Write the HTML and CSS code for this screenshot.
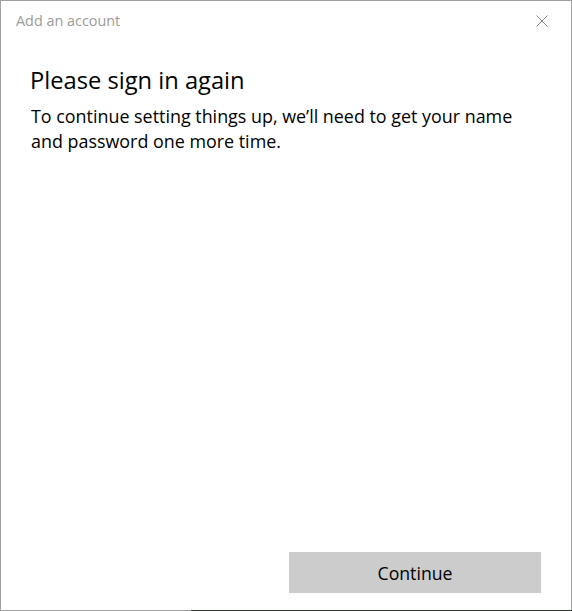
FILE: index.html
```html
<!DOCTYPE html>
<html lang="en">
<head>
  <meta charset="UTF-8">
  <title>Add an account</title>
  <link rel="stylesheet" href="styles.css">
</head>
<body>

<div class="dialog">
  <div class="titlebar">
    <span class="title">Add an account</span>
    <button class="close" aria-label="Close">
      <svg width="12" height="12" viewBox="0 0 12 12">
        <path d="M0.5 0.5 L11.5 11.5 M11.5 0.5 L0.5 11.5" stroke="#8a8a8a" stroke-width="1" fill="none"/>
      </svg>
    </button>
  </div>

  <div class="content">
    <h1>Please sign in again</h1>
    <p>To continue setting things up, we’ll need to get your name and password one more time.</p>
  </div>

  <div class="footer">
    <button class="primary">Continue</button>
  </div>
</div>

</body>
</html>
```

FILE: styles.css
```css
* {
  box-sizing: border-box;
  margin: 0;
  padding: 0;
}

html, body {
  height: 100%;
}

body {
  font-family: 'Open Sans', 'Noto Sans', sans-serif;
  background: #ffffff;
  color: #000000;
}

.dialog {
  position: relative;
  height: 100%;
  display: flex;
  flex-direction: column;
  border: 1px solid #a0a0a0;
  background: #ffffff;
}

/* the desktop shows through under the right part of the bottom edge */
.dialog::after {
  content: '';
  position: absolute;
  left: 190px;
  right: -1px;
  bottom: -1px;
  height: 1px;
  background: #2d3530;
}

.titlebar {
  height: 40px;
  display: flex;
  align-items: center;
  justify-content: space-between;
  padding: 0 23px 0 15px;
}

.title {
  font-size: 14.4px;
  color: #9a9a9a;
  margin-top: -1px;
}

.close {
  border: none;
  background: none;
  width: 12px;
  height: 12px;
  display: flex;
  margin-top: -1px;
}

.content {
  flex: 1;
  padding: 23px 30px 0 29px;
}

h1 {
  font-size: 23.7px;
  font-weight: 400;
  line-height: 32px;
}

p {
  margin-top: 8px;
  font-size: 17.9px;
  line-height: 25px;
  padding-left: 1px;
}

.footer {
  display: flex;
  justify-content: flex-end;
  padding: 0 30px 17px;
}

.primary {
  width: 252px;
  height: 41px;
  border: none;
  background: #cccccc;
  font-family: inherit;
  font-size: 17.7px;
  color: #000000;
}
```
